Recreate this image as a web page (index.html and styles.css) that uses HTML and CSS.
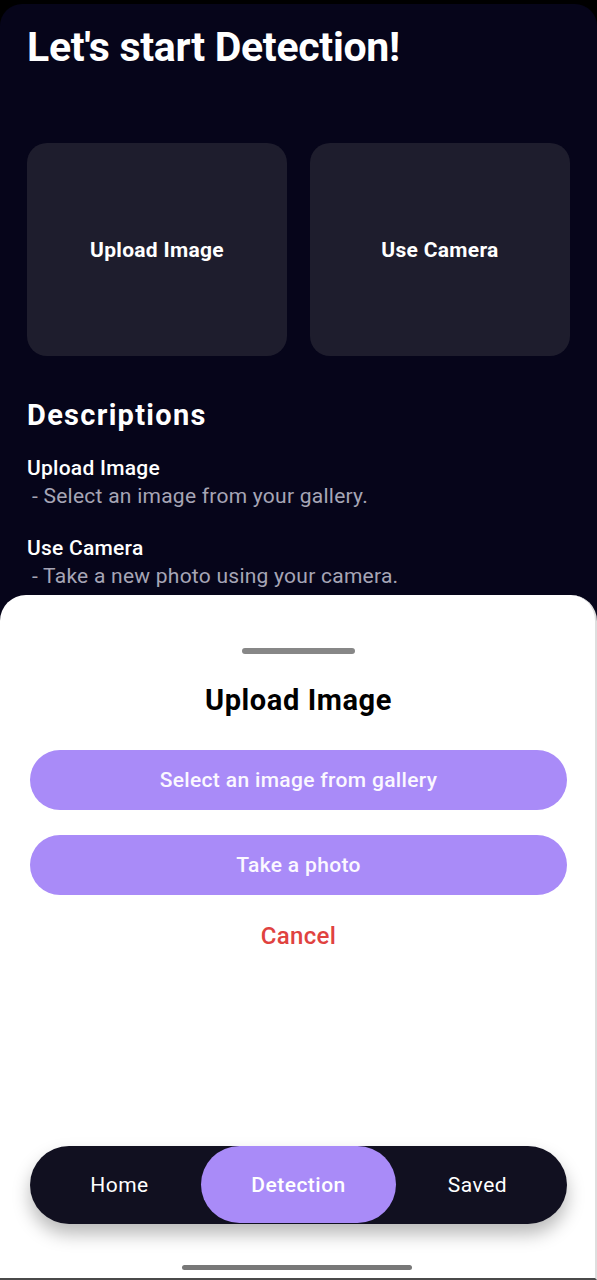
FILE: index.html
```html
<!DOCTYPE html>
<html lang="en">
<head>
<meta charset="utf-8">
<title>Detection</title>
<link rel="stylesheet" href="styles.css">
</head>
<body>
<div class="app">
  <main class="content">
    <h1 class="title">Let's start Detection!</h1>
    <div class="cards">
      <div class="card">Upload Image</div>
      <div class="card">Use Camera</div>
    </div>
    <h2 class="section-title">Descriptions</h2>
    <div class="desc-item">
      <div class="desc-name">Upload Image</div>
      <div class="desc-text">- Select an image from your gallery.</div>
    </div>
    <div class="desc-item">
      <div class="desc-name">Use Camera</div>
      <div class="desc-text">- Take a new photo using your camera.</div>
    </div>
  </main>
  <section class="sheet">
    <div class="handle"></div>
    <h3 class="sheet-title">Upload Image</h3>
    <div class="sheet-actions">
      <button class="pill-btn">Select an image from gallery</button>
      <button class="pill-btn">Take a photo</button>
      <button class="cancel-btn">Cancel</button>
    </div>
    <nav class="tabbar">
      <div class="tab">Home</div>
      <div class="tab active">Detection</div>
      <div class="tab">Saved</div>
    </nav>
    <div class="home-indicator"></div>
  </section>
</div>
</body>
</html>
```

FILE: styles.css
```css
* { box-sizing: border-box; }
html, body {
  margin: 0;
  padding: 0;
  background: #000;
  font-family: Roboto, "Noto Sans", "Liberation Sans", sans-serif;
}
.app {
  margin-top: 4px;
  height: 1276px;
  background: #06051a;
  border-radius: 22px 22px 0 0;
  display: flex;
  flex-direction: column;
  overflow: hidden;
}
.content {
  padding: 19px 27px 0 27px;
  color: #fff;
}
.title {
  margin: 0;
  font-size: 41px;
  line-height: 48px;
  font-weight: 700;
  letter-spacing: -0.3px;
}
.cards {
  margin-top: 72px;
  display: grid;
  grid-template-columns: 1fr 1fr;
  gap: 23px;
}
.card {
  height: 213px;
  background: #1e1d2d;
  border-radius: 20px;
  display: flex;
  align-items: center;
  justify-content: center;
  font-size: 21px;
  letter-spacing: 0.3px;
  font-weight: 700;
  color: #fff;
}
.section-title {
  margin: 42px 0 0 0;
  font-size: 29px;
  line-height: 34px;
  font-weight: 700;
  letter-spacing: 1.3px;
}
.desc-item { margin-top: 22px; }
.desc-item + .desc-item { margin-top: 23px; }
.desc-name {
  font-size: 21px;
  line-height: 28px;
  font-weight: 500;
  letter-spacing: 0.25px;
}
.desc-text {
  font-size: 21px;
  line-height: 29px;
  letter-spacing: 0.25px;
  color: #a6a5b6;
  padding-left: 5px;
}
.sheet {
  margin-top: auto;
  height: 685px;
  background: #fff;
  border-radius: 26px 26px 0 0;
  border-right: 2px solid #dedede;
  border-bottom: 2px solid #4a4a4a;
  padding: 53px 28px 0 30px;
  display: flex;
  flex-direction: column;
  align-items: stretch;
}
.handle {
  align-self: center;
  width: 113px;
  height: 6px;
  border-radius: 3px;
  background: #878787;
}
.sheet-title {
  margin: 30px 0 0 0;
  text-align: center;
  font-size: 29px;
  line-height: 32px;
  font-weight: 700;
  letter-spacing: 0.6px;
  color: #000;
}
.sheet-actions {
  margin-top: 34px;
  display: flex;
  flex-direction: column;
  gap: 25px;
}
.pill-btn {
  height: 60px;
  border: 0;
  border-radius: 30px;
  background: #a98bf8;
  color: #fbf8ff;
  font-family: inherit;
  font-size: 21px;
  letter-spacing: 0.33px;
  font-weight: 500;
}
.cancel-btn {
  margin-top: 2px;
  border: 0;
  background: none;
  padding: 0;
  font-family: inherit;
  font-size: 24px;
  line-height: 28px;
  letter-spacing: 0.3px;
  font-weight: 500;
  color: #e0423f;
}
.tabbar {
  margin-top: auto;
  height: 78px;
  border-radius: 39px;
  background: #111020;
  display: grid;
  grid-template-columns: 1fr 1fr 1fr;
  align-items: stretch;
  box-shadow: 0 10px 18px rgba(0, 0, 0, 0.28);
}
.tab {
  position: relative;
  display: flex;
  align-items: center;
  justify-content: center;
  color: #fff;
  font-size: 21px;
  letter-spacing: 0.5px;
  font-weight: 400;
}
.tab.active {
  font-weight: 500;
  z-index: 0;
}
.tab.active::before {
  content: "";
  position: absolute;
  top: 0;
  bottom: 1px;
  left: -8px;
  right: -8px;
  border-radius: 39px;
  background: #a98bf8;
  z-index: -1;
}
.home-indicator {
  align-self: center;
  width: 230px;
  height: 5px;
  border-radius: 3px;
  background: #787878;
  margin: 41px 4px 8px 0;
}
```
